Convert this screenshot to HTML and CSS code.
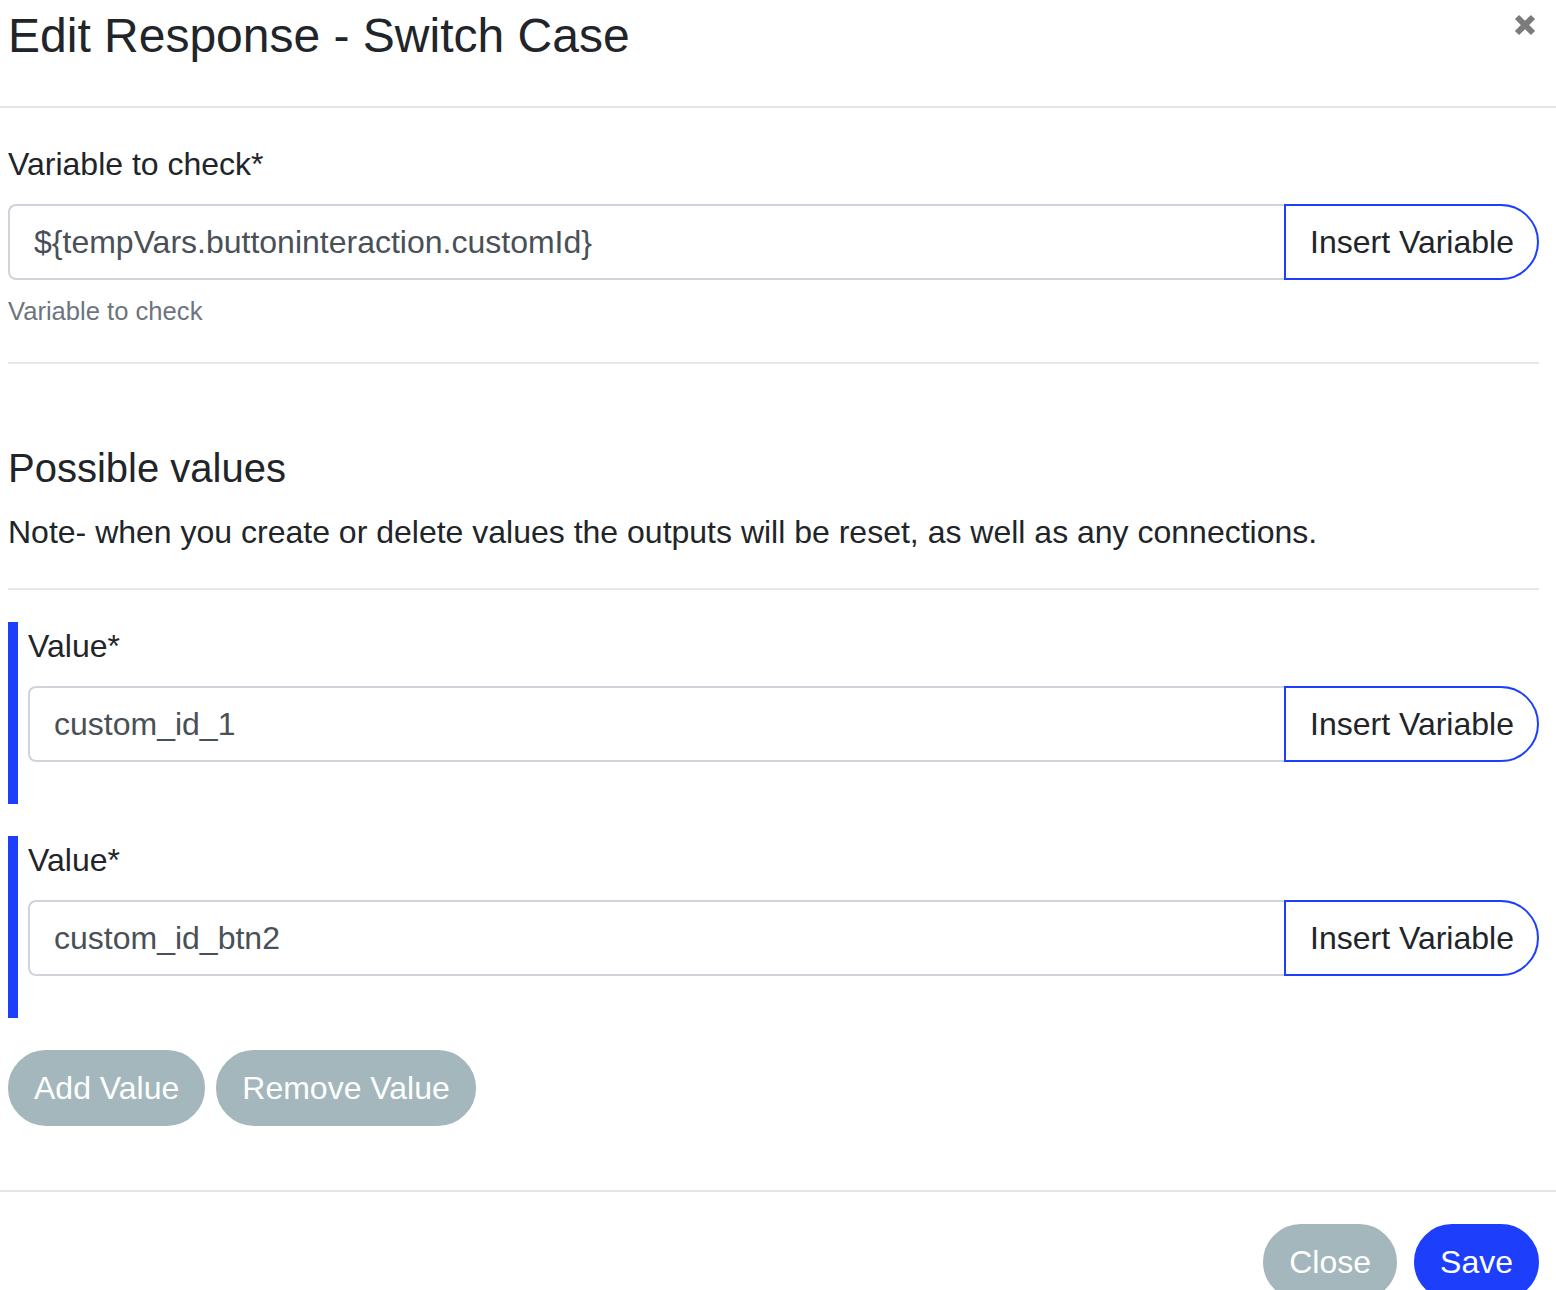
FILE: index.html
```html
<!DOCTYPE html>
<html>
<head>
<meta charset="utf-8">
<link rel="stylesheet" href="styles.css">
</head>
<body>
<div class="modal">
  <div class="modal-header">
    <h4 class="modal-title">Edit Response - Switch Case</h4>
    <button class="close" aria-label="Close">
      <svg width="24" height="24" viewBox="0 0 24 24"><path d="M4 4 L20 20 M20 4 L4 20" stroke="#7b7b7b" stroke-width="6" stroke-linecap="butt" fill="none"/></svg>
    </button>
  </div>
  <div class="modal-body">
    <div class="form-group first">
      <label class="label">Variable to check*</label>
      <div class="input-group">
        <div class="form-control">${tempVars.buttoninteraction.customId}</div>
        <button class="btn-insert">Insert Variable</button>
      </div>
      <small class="form-text">Variable to check</small>
    </div>
    <hr class="rule rule-a">
    <h5 class="section-title">Possible values</h5>
    <p class="note">Note- when you create or delete values the outputs will be reset, as well as any connections.</p>
    <hr class="rule rule-b">
    <div class="value-block">
      <label class="label">Value*</label>
      <div class="input-group">
        <div class="form-control">custom_id_1</div>
        <button class="btn-insert">Insert Variable</button>
      </div>
    </div>
    <div class="value-block">
      <label class="label">Value*</label>
      <div class="input-group">
        <div class="form-control">custom_id_btn2</div>
        <button class="btn-insert">Insert Variable</button>
      </div>
    </div>
    <div class="actions">
      <button class="btn btn-grey">Add Value</button>
      <button class="btn btn-grey">Remove Value</button>
    </div>
  </div>
  <div class="modal-footer">
    <button class="btn btn-grey">Close</button>
    <button class="btn btn-blue">Save</button>
  </div>
</div>
</body>
</html>
```
FILE: styles.css
```css
* { box-sizing: border-box; }
html, body { margin: 0; padding: 0; background: #fff; }
body {
  font-family: "Liberation Sans", Arial, Helvetica, sans-serif;
  font-size: 32px;
  line-height: 1.5;
  color: #212529;
  overflow: hidden;
  height: 1290px;
}
.modal { width: 1556px; }
.modal-header {
  display: flex;
  justify-content: space-between;
  align-items: flex-start;
  padding: 0 19px 34px 8px;
  border-bottom: 2px solid #e3e5e8;
}
.modal-title {
  margin: 0;
  font-size: 48px;
  font-weight: 400;
  line-height: 72px;
}
.close {
  background: none;
  border: 0;
  padding: 0;
  margin-top: 13px;
  width: 24px;
  height: 24px;
  display: block;
}
.close svg { display: block; }
.modal-body { padding: 32px 17px 64px 8px; }
.label { display: block; line-height: 48px; margin-bottom: 16px; }
.input-group { display: flex; height: 76px; }
.form-control {
  flex: 1;
  min-width: 0;
  height: 76px;
  padding: 12px 24px;
  line-height: 48px;
  color: #495057;
  border: 2px solid #ced4da;
  border-right: 0;
  border-radius: 8px 0 0 8px;
  white-space: nowrap;
}
.btn-insert {
  flex: 0 0 255px;
  width: 255px;
  height: 76px;
  font-family: inherit;
  font-size: 32px;
  line-height: 48px;
  color: #212529;
  background: #fff;
  border: 2px solid #1d3ffb;
  border-radius: 0 38px 38px 0;
  padding: 0 0 0 24px;
  text-align: left;
  white-space: nowrap;
}
.form-text {
  display: block;
  margin-top: 12px;
  font-size: 25.6px;
  line-height: 38.4px;
  color: #6c757d;
}
.rule { border: 0; border-top: 2px solid #e7e7e7; margin: 0; }
.rule-a { margin-top: 32px; margin-bottom: 80px; }
.section-title {
  margin: 0 0 16px;
  font-size: 40px;
  font-weight: 400;
  line-height: 48px;
}
.note { margin: 0 0 32px; line-height: 48px; }
.rule-b { margin-bottom: 32px; }
.value-block {
  border-left: 10px solid #1d3ffb;
  padding: 0 0 42px 10px;
  margin-bottom: 32px;
}
.actions { display: flex; gap: 11px; }
.btn {
  height: 76px;
  padding: 12px 24px;
  font-family: inherit;
  font-size: 32px;
  line-height: 48px;
  color: #fff;
  border: 2px solid transparent;
  border-radius: 38px;
  white-space: nowrap;
}
.btn-grey { background: #a3b7bc; border-color: #a3b7bc; }
.btn-blue { background: #1d3ffb; border-color: #1d3ffb; }
.modal-footer {
  border-top: 2px solid #e3e5e8;
  display: flex;
  justify-content: flex-end;
  gap: 17px;
  padding: 32px 17px 0 8px;
}
```
